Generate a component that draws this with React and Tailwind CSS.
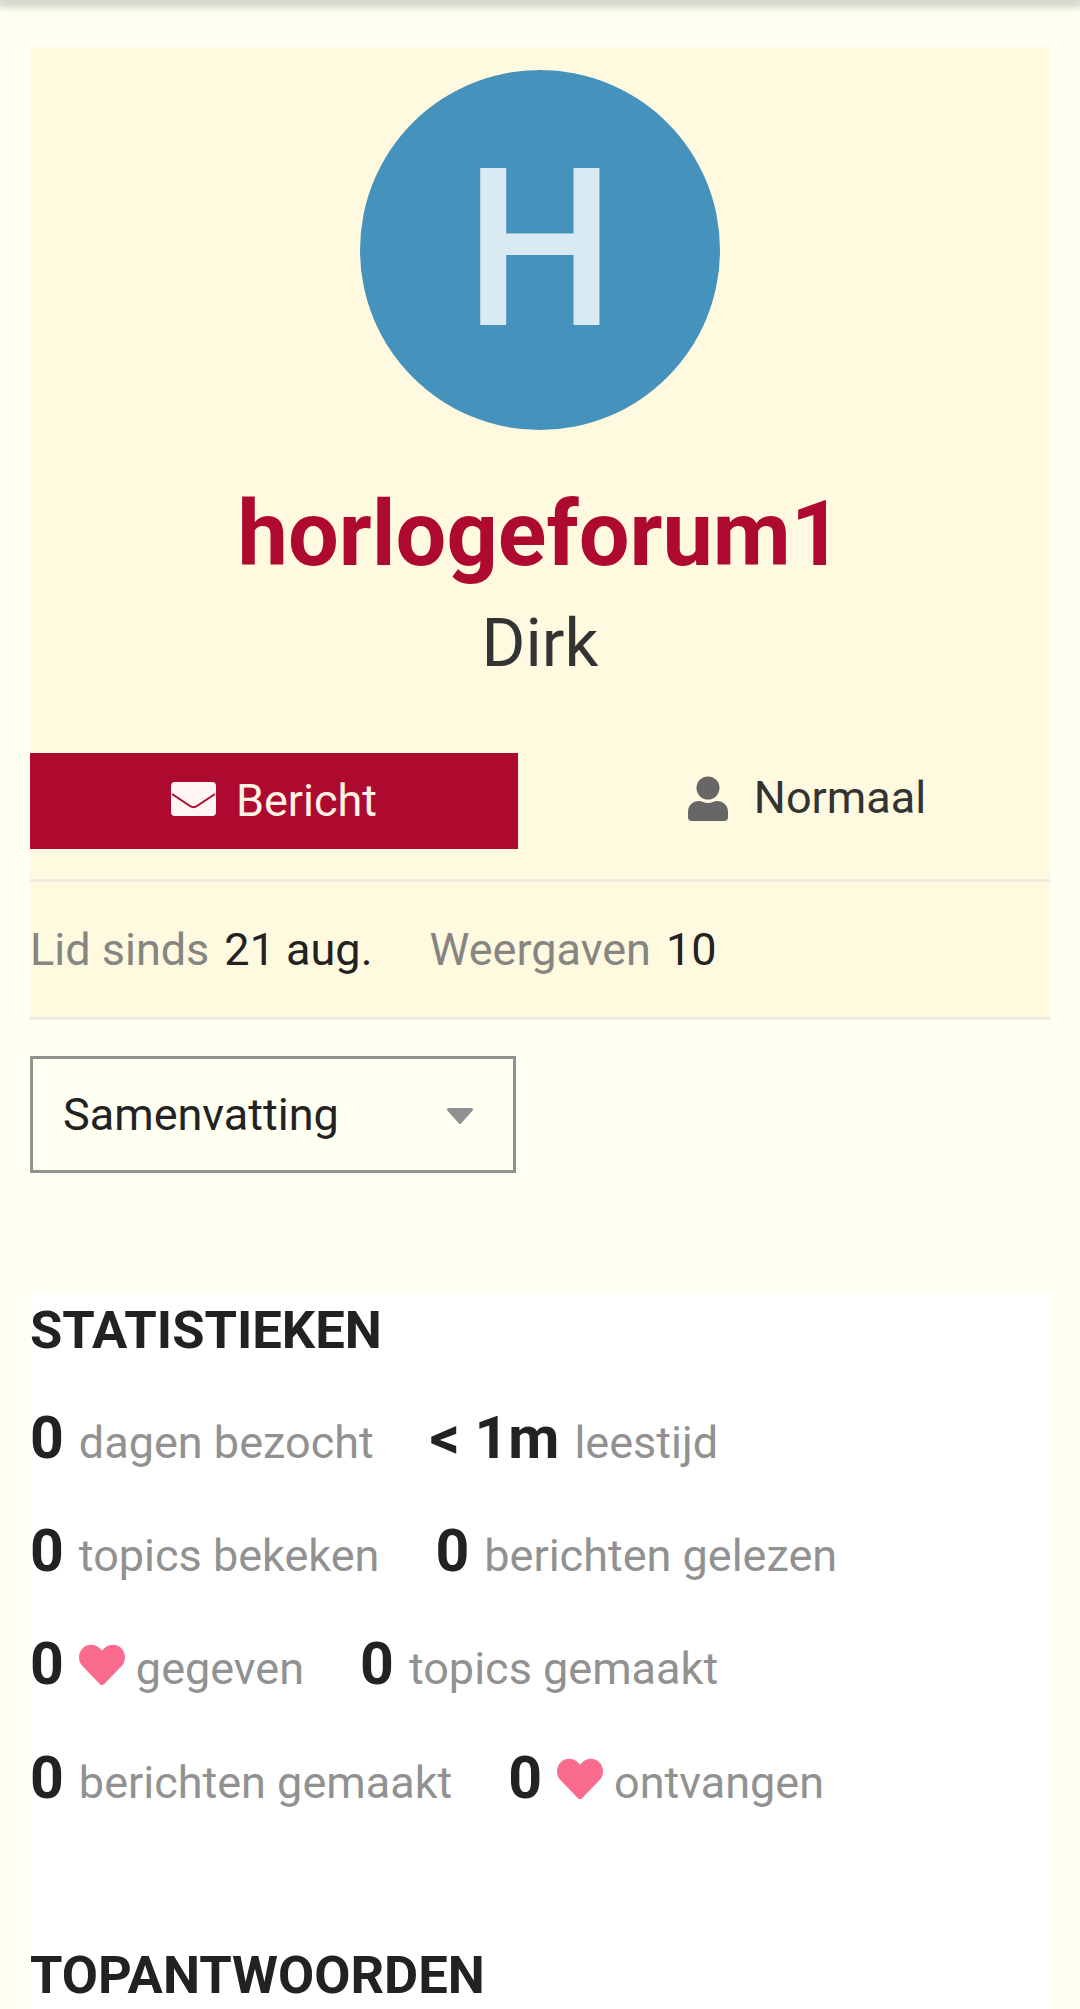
import React from 'react';
import { FaHeart } from 'react-icons/fa';

const Stat = ({ value, label, heart }) => (
  <div className="flex items-baseline h-[64px]">
    <span className="text-[59px] font-bold text-[#222222] leading-[64px]">{value}</span>
    {heart && <FaHeart className="ml-[15px] w-[46px] h-[46px] text-[#fa6c8d] self-center translate-y-px" />}
    <span className={`${heart ? 'ml-[11px]' : 'ml-[15px]'} text-[45px] text-[#919191] leading-[64px]`}>{label}</span>
  </div>
);

const rows = [
  [{ value: '0', label: 'dagen bezocht' }, { value: '< 1m', label: 'leestijd' }],
  [{ value: '0', label: 'topics bekeken' }, { value: '0', label: 'berichten gelezen' }],
  [{ value: '0', label: 'gegeven', heart: true }, { value: '0', label: 'topics gemaakt' }],
  [{ value: '0', label: 'berichten gemaakt' }, { value: '0', label: 'ontvangen', heart: true }],
];

const App = () => {
  return (
    <div className="h-[2009px] overflow-hidden bg-[#fffff2] font-['Roboto',sans-serif]">
      {/* Header edge */}
      <div className="h-px bg-[#d8d8d0] shadow-[0_2px_8px_3px_rgba(0,0,0,0.25)]"></div>

      <div className="mx-[30px] mt-[46px]">
        {/* Profile card */}
        <div className="bg-[#fff9df]">
          <div className="flex flex-col items-center pt-[23px]">
            <div className="w-[360px] h-[360px] rounded-full bg-[#4593bc] flex items-center justify-center">
              <span className="text-[220px] leading-none font-medium text-[#daeaf2] scale-x-[0.96]">H</span>
            </div>
            <h1 className="mt-[50px] text-[90px] leading-[110px] font-bold text-[#ae0a30]">horlogeforum1</h1>
            <div className="mt-[16px] text-[67px] leading-[74px] text-[#333333]">Dirk</div>
          </div>

          <div className="flex mt-[73px] pb-[30px] border-b-[3px] border-[#f0ebdc]">
            <button className="w-[488px] h-[96px] bg-[#ae0a30] text-[#fff3e6] flex items-center justify-center text-[45px]">
              <svg viewBox="0 0 45 34" className="w-[45px] h-[34px] mr-[20px] -translate-y-[2px]">
                <rect width="45" height="34" rx="4" fill="#fff6f4" />
                <path d="M1 12 L19 24 Q22.5 26.5 26 24 L44 12" fill="none" stroke="#ae0a30" strokeWidth="2" />
              </svg>
              Bericht
            </button>
            <div className="flex-1 flex items-center justify-center pl-[46px] text-[45px] text-[#333333] -translate-y-[3px]">
              <svg viewBox="0 0 40 45" className="w-[40px] h-[45px] mr-[26px]">
                <circle cx="20" cy="12" r="11.5" fill="#666666" />
                <path d="M0 36C0 29 5 25 11 25C14 25 16 27 20 27C24 27 26 25 29 25C35 25 40 29 40 36V41A4 4 0 0 1 36 45H4A4 4 0 0 1 0 41Z" fill="#666666" />
              </svg>
              Normaal
            </div>
          </div>

          <div className="h-[138px] flex items-center text-[45px] border-b-[3px] border-[#ececdf]">
            <span className="text-[#858581]">Lid sinds</span>
            <span className="ml-[15px] text-[#222222]">21 aug.</span>
            <span className="ml-[57px] text-[#858581]">Weergaven</span>
            <span className="ml-[15px] text-[#222222]">10</span>
          </div>
        </div>

        {/* Nav dropdown */}
        <div className="mt-[36px] w-[486px] h-[117px] border-[3px] border-[#919191] flex items-center justify-between pl-[30px] pr-[40px]">
          <span className="text-[45px] text-[#222222]">Samenvatting</span>
          <svg viewBox="0 0 26 16" className="w-[26px] h-[16px] translate-y-[1px]">
            <path d="M1.5 1.5h23L13 14.5z" fill="#919191" stroke="#919191" strokeWidth="3" strokeLinejoin="round" />
          </svg>
        </div>

        {/* Stats */}
        <div className="mt-[121px] bg-white h-[720px] pt-[2px]">
          <h2 className="text-[52.5px] leading-[68px] font-bold text-[#222222] uppercase">Statistieken</h2>
          <div className="mt-[42px] flex flex-col gap-[49.2px]">
            {rows.map((row, i) => (
              <div key={i} className="flex gap-[56px]">
                {row.map((s, j) => <Stat key={j} {...s} />)}
              </div>
            ))}
          </div>
          <h2 className="mt-[131px] text-[52.5px] leading-[68px] font-bold text-[#222222] uppercase">Topantwoorden</h2>
        </div>
      </div>
    </div>
  );
};

export default App;
